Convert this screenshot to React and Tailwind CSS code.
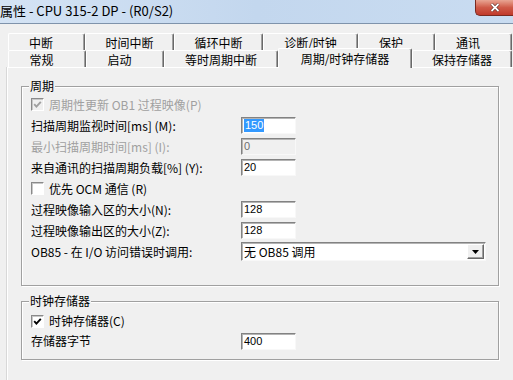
import React from 'react';

const row1 = [
  { t: '中断', w: 'w-[77px] pr-[11px]' },
  { t: '时间中断', w: 'w-[89px]' },
  { t: '循环中断', w: 'w-[89px]' },
  { t: '诊断/时钟', w: 'w-[95px]' },
  { t: '保护', w: 'w-[77px] pr-[11px]' },
  { t: '通讯', w: 'w-[77px] pr-[11px]' },
];

const row2 = [
  { t: '常规', w: 'w-[78px] pr-[11px]' },
  { t: '启动', w: 'w-[78px] pr-[11px]' },
  { t: '等时周期中断', w: 'w-[114px]' },
  { t: '周期/时钟存储器', w: 'w-[134px]', active: true },
  { t: '保持存储器', w: 'w-[100px]' },
];

function Tab({ tab }) {
  if (tab.active) {
    return (
      <div className={`${tab.w} relative z-10 -mt-[2px] h-[20px] flex items-center justify-center bg-[#f0f0f0] border-t border-l border-white border-r border-r-[#696969] rounded-t-[2px] shadow-[inset_-1px_0_0_#a0a0a0]`}>
        {tab.t}
      </div>
    );
  }
  return (
    <div className={`${tab.w} h-[17px] flex items-center justify-center pt-[2px] border-t border-l border-white border-r border-r-[#696969] rounded-t-[2px] shadow-[inset_-1px_0_0_#a0a0a0]`}>
      {tab.t}
    </div>
  );
}

function Check({ checked, disabled }) {
  return (
    <span className={`w-[13px] h-[13px] shrink-0 flex items-center justify-center border border-t-[#8a8a8a] border-l-[#8a8a8a] border-b-white border-r-white shadow-[inset_1px_1px_0_#c8c8c8] ${disabled ? 'bg-[#f0f0f0]' : 'bg-white'}`}>
      {checked && (
        <svg width="9" height="9" viewBox="0 0 9 9">
          <polyline points="1.2,4.2 3.4,6.6 7.8,1.8" fill="none" stroke={disabled ? '#a0a0a0' : '#000'} strokeWidth="1.9" />
        </svg>
      )}
    </span>
  );
}

function Field({ value, disabled, selected }) {
  return (
    <div className={`w-[55px] h-[17px] flex items-center pl-[2px] text-[11px] leading-none font-['Liberation_Sans',sans-serif] border border-t-[#828282] border-l-[#828282] border-b-[#f8f8f8] border-r-[#f8f8f8] shadow-[inset_1px_1px_0_#b4b4b4] ${disabled ? 'bg-[#f0f0f0] text-[#6d6d6d]' : 'bg-white text-black'}`}>
      {selected ? <span className="bg-[#3399ff] text-white px-[1px] h-[13px] flex items-center">{value}</span> : value}
    </div>
  );
}

function Row({ label, children, disabled, h = 'h-[21px]' }) {
  return (
    <div className={`${h} flex items-center`}>
      <div className={`w-[210px] ${disabled ? 'text-[#a0a0a0]' : 'text-black'}`}>{label}</div>
      {children}
    </div>
  );
}

function CheckRow({ label, checked, disabled, h = 'h-[21px]' }) {
  return (
    <div className={`${h} flex items-center gap-[5px]`}>
      <Check checked={checked} disabled={disabled} />
      <span className={disabled ? 'text-[#a0a0a0]' : 'text-black'}>{label}</span>
    </div>
  );
}

function Group({ title, className, children }) {
  return (
    <div className={`relative border border-[#a0a0a0] shadow-[1px_1px_0_#ffffff,inset_1px_1px_0_#ffffff] ${className}`}>
      <span className="absolute -top-[8px] left-[7px] px-[1px] bg-[#f0f0f0] leading-[14px]">{title}</span>
      {children}
    </div>
  );
}

export default function App() {
  return (
    <div className="w-[513px] h-[380px] overflow-hidden bg-[#f0f0f0] text-[12px] leading-[14px] text-black font-['Noto_Sans_CJK_SC',sans-serif]">
      {/* 标题栏 */}
      <div className="h-[24px] flex justify-between border-b border-[#7f93ab] bg-gradient-to-r from-[#d4e3f4] via-[#c3d7ee] to-[#c9dcf1]">
        <div className="flex items-center pb-[2px] text-[13px]">属性 - CPU 315-2 DP - (R0/S2)</div>
        <div className="w-[38px] h-[16px] flex items-center justify-center rounded-bl-[5px] border border-t-0 border-r-0 border-[#7a2a20] bg-gradient-to-b from-[#e8a493] via-[#cf5a48] to-[#c0392b]">
          <svg width="10" height="9" viewBox="0 0 10 9">
            <path d="M1.5 1 L8.5 8 M8.5 1 L1.5 8" stroke="#4a1a14" strokeWidth="3" />
            <path d="M1.5 1 L8.5 8 M8.5 1 L1.5 8" stroke="#ffffff" strokeWidth="1.8" />
          </svg>
        </div>
      </div>

      {/* 选项卡 */}
      <div className="mt-[9px] pl-[8px]">
        <div className="flex h-[17px]">
          {row1.map((t) => <Tab key={t.t} tab={t} />)}
        </div>
        <div className="flex h-[17px]">
          {row2.map((t) => <Tab key={t.t} tab={t} />)}
        </div>
      </div>

      {/* 面板 */}
      <div className="ml-[7px] h-[320px] border-t border-l border-white shadow-[-1px_0_0_#d8d8d8] pl-[13px] pr-[14px] pt-[18px]">
        <Group title="周期" className="h-[200px] pt-[7px] pl-[9px]">
          <CheckRow label="周期性更新 OB1 过程映像(P)" checked disabled />
          <Row label="扫描周期监视时间[ms] (M):">
            <Field value="150" selected />
          </Row>
          <Row label="最小扫描周期时间[ms] (I):" disabled>
            <Field value="0" disabled />
          </Row>
          <Row label="来自通讯的扫描周期负载[%] (Y):">
            <Field value="20" />
          </Row>
          <CheckRow label="优先 OCM 通信 (R)" />
          <Row label="过程映像输入区的大小(N):">
            <Field value="128" />
          </Row>
          <Row label="过程映像输出区的大小(Z):">
            <Field value="128" />
          </Row>
          <Row label="OB85 - 在 I/O 访问错误时调用:">
            <div className="w-[245px] h-[19px] flex items-center justify-between bg-white border border-t-[#828282] border-l-[#828282] border-b-[#f8f8f8] border-r-[#f8f8f8] shadow-[inset_1px_1px_0_#b4b4b4]">
              <span className="pl-[2px]">无 OB85 调用</span>
              <span className="w-[17px] h-[15px] mr-[1px] flex items-center justify-center bg-[#f0f0f0] border border-t-white border-l-white border-b-[#696969] border-r-[#696969] shadow-[inset_-1px_-1px_0_#a0a0a0]">
                <svg width="7" height="4" viewBox="0 0 7 4">
                  <path d="M0 0 H7 L3.5 4 Z" fill="#000" />
                </svg>
              </span>
            </div>
          </Row>
        </Group>

        <Group title="时钟存储器" className="mt-[15px] h-[59px] pt-[9px] pl-[9px]">
          <CheckRow label="时钟存储器(C)" checked h="h-[20px]" />
          <Row label="存储器字节" h="h-[20px]">
            <Field value="400" />
          </Row>
        </Group>
      </div>
    </div>
  );
}
